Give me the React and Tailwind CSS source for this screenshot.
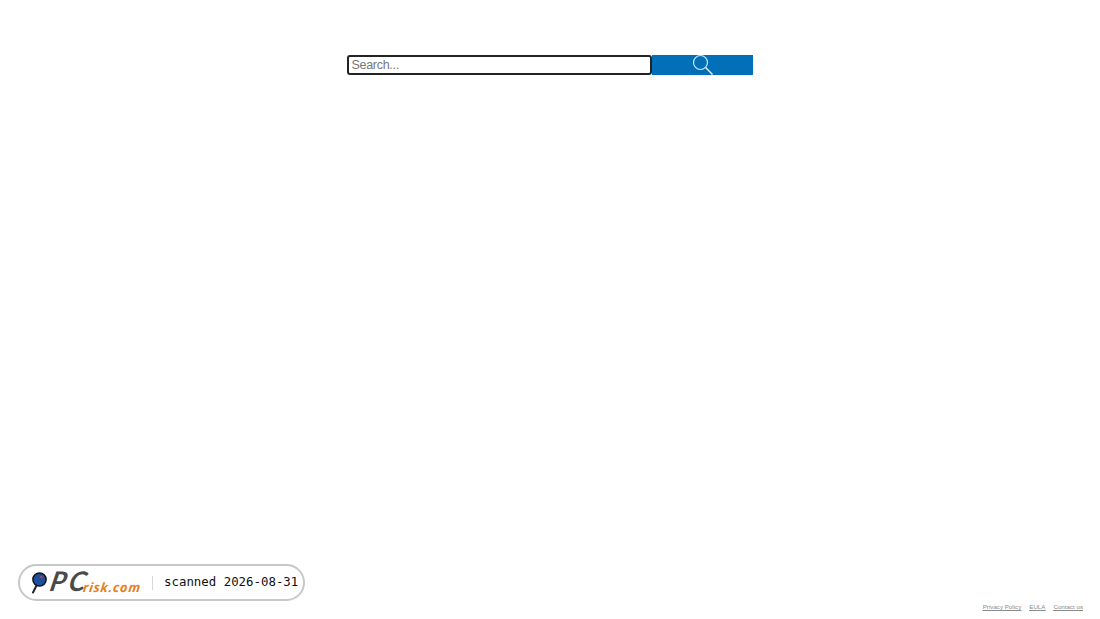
import React from "react";

function Lens() {
  return (
    <svg width="22" height="22" viewBox="0 0 22 22" fill="none" aria-hidden="true">
      <circle cx="8.5" cy="8.5" r="7" stroke="#d5e8f5" strokeWidth="1.2" />
      <path d="M13.6 13.6L20.5 20.5" stroke="#e6f1f8" strokeWidth="1.4" />
    </svg>
  );
}

function LogoMark() {
  return (
    <svg width="17" height="24" viewBox="0 0 17 24" className="shrink-0" aria-hidden="true">
      <path d="M5.5 14.5L2 21.5" stroke="#222" strokeWidth="2" strokeLinecap="round" />
      <circle cx="8.5" cy="8.5" r="6.6" fill="#1d4f9c" stroke="#111" strokeWidth="1.5" />
      <circle cx="10.5" cy="6" r="1.3" fill="#b5405a" />
    </svg>
  );
}

export default function App() {
  return (
    <div className="relative h-[619px] w-full overflow-hidden bg-white font-['Liberation_Sans',Arial,sans-serif]">
      <div className="flex justify-center pt-[55px]">
        <input
          placeholder="Search..."
          className="box-border h-[20px] w-[305px] rounded-[3px] border-2 border-[#242424] bg-white pr-[3px] pl-[2.5px] pb-[1px] text-[12.5px] leading-none tracking-[-0.3px] outline-none placeholder:text-[#777]"
        />
        <button className="flex h-[20px] w-[101px] items-center justify-center bg-[#0170b9]">
          <Lens />
        </button>
      </div>

      <div className="absolute left-[18px] top-[564px] flex h-[37px] w-[287px] items-center whitespace-nowrap rounded-full border-2 border-[#c8c8c8] bg-white pl-[11px]">
        <LogoMark />
        <span className="ml-[3px] mb-[5px] w-[32px] -skew-x-12 font-['Lato',sans-serif] text-[27px] leading-none font-bold italic tracking-[3px] text-[#4a4a4a]">PC</span>
        <span className="mt-[9px] w-[59px] -skew-x-6 font-['Open_Sans',sans-serif] text-[13px] leading-none font-bold italic tracking-[0.7px] text-[#e8801a]">risk.com</span>
        <span className="ml-[10px] h-[14px] w-px shrink-0 bg-[#d8d8d8]" />
        <span className="ml-[11px] font-['DejaVu_Sans_Mono',monospace] text-[12.4px] leading-none text-[#111]">scanned 2026-08-31</span>
      </div>

      <div className="absolute right-[17px] top-[602px] flex gap-2 text-[6.2px] leading-[9px] text-[#8a8a8a] underline">
        <a>Privacy Policy</a>
        <a>EULA</a>
        <a>Contact us</a>
      </div>
    </div>
  );
}
